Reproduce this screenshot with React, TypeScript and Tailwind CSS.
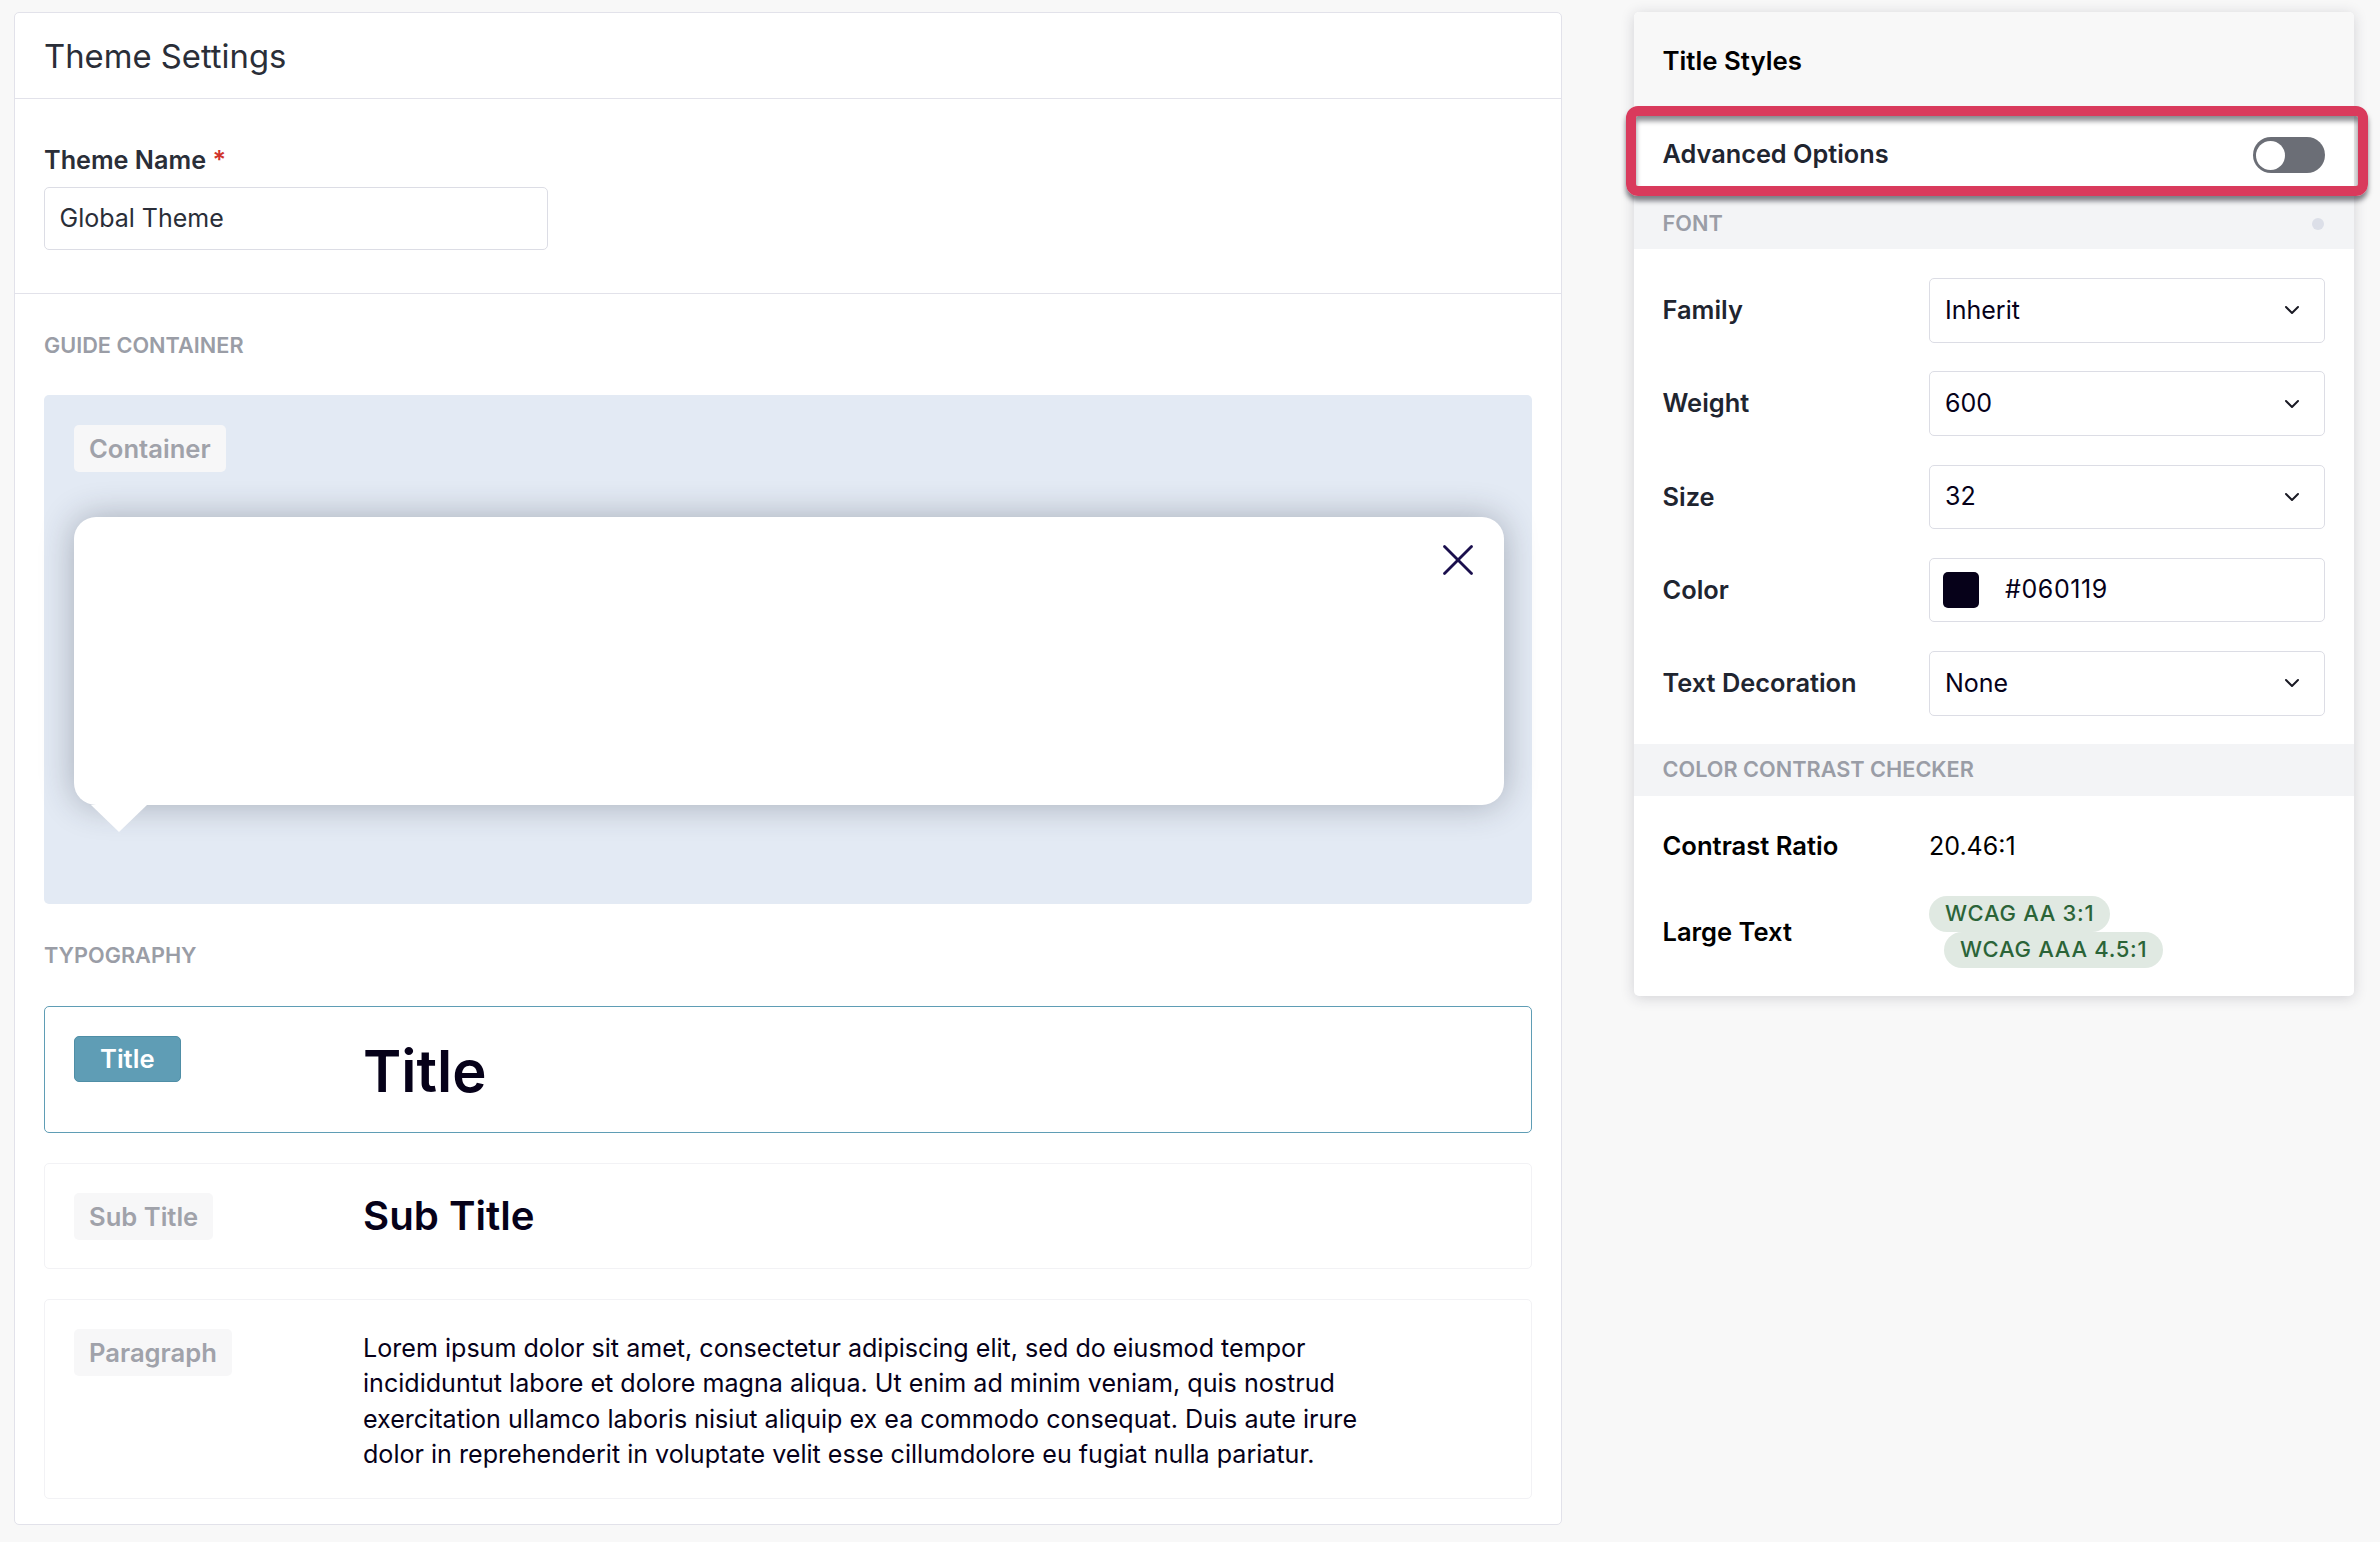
import { ChevronDown, X } from "lucide-react";

function SelectBox({ value }: { value: string }) {
  return (
    <div className="flex h-[64.5px] flex-1 items-center justify-between rounded-[5px] border border-[#dcdde5] bg-white pl-[15px] pr-[20px] text-[25px] text-[#060119]">
      <span>{value}</span>
      <ChevronDown size={24} strokeWidth={2} className="text-[#1a1a24]" />
    </div>
  );
}

function FieldRow({ label, children }: { label: string; children: React.ReactNode }) {
  return (
    <div className="flex items-center">
      <span className="w-[266.5px] text-[25.4px] font-semibold text-[#1f2530]">{label}</span>
      {children}
    </div>
  );
}

function TypeRow({
  tag,
  active,
  children,
  className,
}: {
  tag: string;
  active?: boolean;
  children: React.ReactNode;
  className: string;
}) {
  return (
    <div
      className={
        active
          ? `flex items-start rounded-[5px] border-[1.5px] border-[#5f9db5] px-[29px] pt-[29px] ${className}`
          : `flex items-start rounded-[5px] border border-[#f2f2f5] px-[29px] pt-[29px] ${className}`
      }
    >
      <div className="w-[289px] shrink-0">
        {active ? (
          <span className="inline-flex h-[46px] items-center rounded-[5px] border border-[#4f8ea6] bg-[#5f9db5] px-[25px] text-[25.6px] font-semibold leading-none text-white">
            {tag}
          </span>
        ) : (
          <span className="inline-flex h-[47px] items-center rounded-[5px] bg-[#f7f7f8] px-[15px] text-[25.6px] font-semibold leading-none text-[#a0a2aa]">
            {tag}
          </span>
        )}
      </div>
      {children}
    </div>
  );
}

export default function App() {
  return (
    <div className="flex h-[1542px] items-start overflow-hidden bg-[#f8f8f8] pl-[14px] font-['Inter',sans-serif]">
      {/* theme settings */}
      <div className="mt-[12px] w-[1548px] rounded-[5px] border-[1.5px] border-[#e2e2ea] bg-white">
        <div className="flex h-[85.5px] items-center border-b-[1.5px] border-[#e2e2ea] px-[29px]">
          <h1 className="mt-[2px] text-[32.8px] font-normal text-[#2a2e38]">Theme Settings</h1>
        </div>

        <div className="h-[195.5px] border-b-[1.5px] border-[#e2e2ea] px-[29px] pt-[46.5px]">
          <label className="block text-[25.2px] font-semibold leading-[30px] text-[#2a2e38]">
            Theme Name <span className="text-[#d0342c]">*</span>
          </label>
          <div className="mt-[12px] flex h-[63px] w-[504px] items-center rounded-[5px] border border-[#dcdde5] px-[14.5px] text-[25px] text-[#2a2e38]">
            Global Theme
          </div>
        </div>

        <div className="px-[29px] pb-[25px] pt-[39px]">
          <h2 className="text-[21.7px] font-semibold leading-[24px] text-[#9a9da6]">GUIDE CONTAINER</h2>

          {/* guide container */}
          <div className="mt-[38px] h-[509px] rounded-[5px] bg-[#e3eaf4] pl-[30px] pt-[30px]">
            <span className="inline-flex h-[47px] items-center rounded-[5px] bg-[#f7f7f8] px-[15px] text-[25.6px] font-semibold leading-none text-[#a0a2aa]">
              Container
            </span>
            <div className="relative mt-[44.5px] flex h-[288px] w-[1430px] items-start justify-end rounded-[22px] bg-white pr-[19px] pt-[16px] shadow-[0_0_34px_rgba(40,45,60,0.33)]">
              <X size={54} strokeWidth={1.25} className="text-[#1a0f4d]" />
              <svg
                className="absolute left-[17px] top-full"
                width="56"
                height="28"
                viewBox="0 0 56 28"
              >
                <polygon points="0,0 56,0 28,27" fill="#fff" />
              </svg>
            </div>
          </div>

          <h2 className="mt-[39px] text-[21.7px] font-semibold leading-[24px] text-[#9a9da6]">TYPOGRAPHY</h2>

          {/* typography */}
          <div className="mt-[39px] flex flex-col gap-[30px]">
            <TypeRow tag="Title" active className="h-[127px]">
              <span className="mt-[-0.5px] text-[58px] font-semibold leading-[70px] text-[#060119]">Title</span>
            </TypeRow>
            <TypeRow tag="Sub Title" className="h-[106px]">
              <span className="mt-[-1px] text-[40.2px] font-semibold leading-[47px] text-[#060119]">Sub Title</span>
            </TypeRow>
            <TypeRow tag="Paragraph" className="h-[200px]">
              <p className="mt-[2px] max-w-[1015px] text-[25.1px] leading-[35.4px] text-[#060119]">
                Lorem ipsum dolor sit amet, consectetur adipiscing elit, sed do eiusmod tempor incididuntut labore et
                dolore magna aliqua. Ut enim ad minim veniam, quis nostrud exercitation ullamco laboris nisiut aliquip
                ex ea commodo consequat. Duis aute irure dolor in reprehenderit in voluptate velit esse cillumdolore eu
                fugiat nulla pariatur.
              </p>
            </TypeRow>
          </div>
        </div>
      </div>

      {/* title styles */}
      <div className="ml-[72px] mt-[12px] w-[720px] rounded-[5px] bg-white shadow-[0_2px_14px_rgba(40,40,60,0.18)]">
        <div className="flex h-[105px] items-start rounded-t-[5px] bg-[#f8f8f8] pl-[28.5px] pr-[30px] pt-[34px]">
          <h2 className="text-[25.8px] font-semibold leading-[30px] text-black">Title Styles</h2>
        </div>

        <div className="relative flex h-[75px] items-center justify-between bg-white pl-[28.5px] pr-[29px]">
          <span className="mb-[1px] text-[25.3px] font-semibold text-[#1f2530]">Advanced Options</span>
          <div className="mt-[1px] flex h-[36px] w-[72px] items-center rounded-full bg-[#6b6e76] pl-[3px]">
            <div className="h-[29px] w-[29px] rounded-full bg-white" />
          </div>
          {/* highlight drawn over the row */}
          <div className="absolute left-[-8px] right-[-14px] top-[-11px] h-[90px] rounded-[12px] border-[10px] border-[#d93a5c] shadow-[0_5px_5px_rgba(30,30,40,0.55),inset_0_5px_5px_rgba(30,30,40,0.5)]" />
        </div>

        <div className="flex h-[57px] items-center justify-between bg-[#f3f4f6] pl-[28.5px] pr-[30px] pt-[6.5px]">
          <span className="text-[21.7px] font-semibold text-[#9a9da6]">FONT</span>
          <span className="h-[12px] w-[12px] rounded-full bg-[#dcdfe8]" />
        </div>

        <div className="flex flex-col gap-[28.75px] pb-[28px] pl-[28.5px] pr-[29px] pt-[29px]">
          <FieldRow label="Family">
            <SelectBox value="Inherit" />
          </FieldRow>
          <FieldRow label="Weight">
            <SelectBox value="600" />
          </FieldRow>
          <FieldRow label="Size">
            <SelectBox value="32" />
          </FieldRow>
          <FieldRow label="Color">
            <div className="flex h-[64.5px] flex-1 items-center rounded-[5px] border border-[#dcdde5] pl-[13px] text-[25px] text-[#060119]">
              <span className="h-[36px] w-[36px] rounded-[5px] bg-[#060119]" />
              <span className="ml-[26px] tracking-[0.6px]">#060119</span>
            </div>
          </FieldRow>
          <FieldRow label="Text Decoration">
            <SelectBox value="None" />
          </FieldRow>
        </div>

        <div className="flex h-[52px] items-center bg-[#f3f4f6] pl-[28.5px] pr-[30px]">
          <span className="text-[21.7px] font-semibold text-[#9a9da6]">COLOR CONTRAST CHECKER</span>
        </div>

        <div className="flex flex-col gap-[34.5px] rounded-b-[5px] pb-[28px] pl-[28.5px] pr-[30px] pt-[35.5px]">
          <div className="flex items-center text-[25px] leading-[30px] text-black">
            <span className="w-[266.5px] text-[25.6px] font-semibold">Contrast Ratio</span>
            <span>20.46:1</span>
          </div>
          <div className="flex items-center text-[25px] text-black">
            <span className="mt-[1px] w-[266.5px] text-[25.5px] font-semibold">Large Text</span>
            <div className="flex flex-col items-start">
              <span className="flex h-[36px] items-center rounded-full bg-[#e0e9e2] px-[16px] text-[22px] font-medium tracking-[0.7px] text-[#2b6438]">
                WCAG AA 3:1
              </span>
              <span className="ml-[15px] flex h-[36px] items-center rounded-full bg-[#e0e9e2] px-[16px] text-[22px] font-medium tracking-[0.7px] text-[#2b6438]">
                WCAG AAA 4.5:1
              </span>
            </div>
          </div>
        </div>
      </div>
    </div>
  );
}
